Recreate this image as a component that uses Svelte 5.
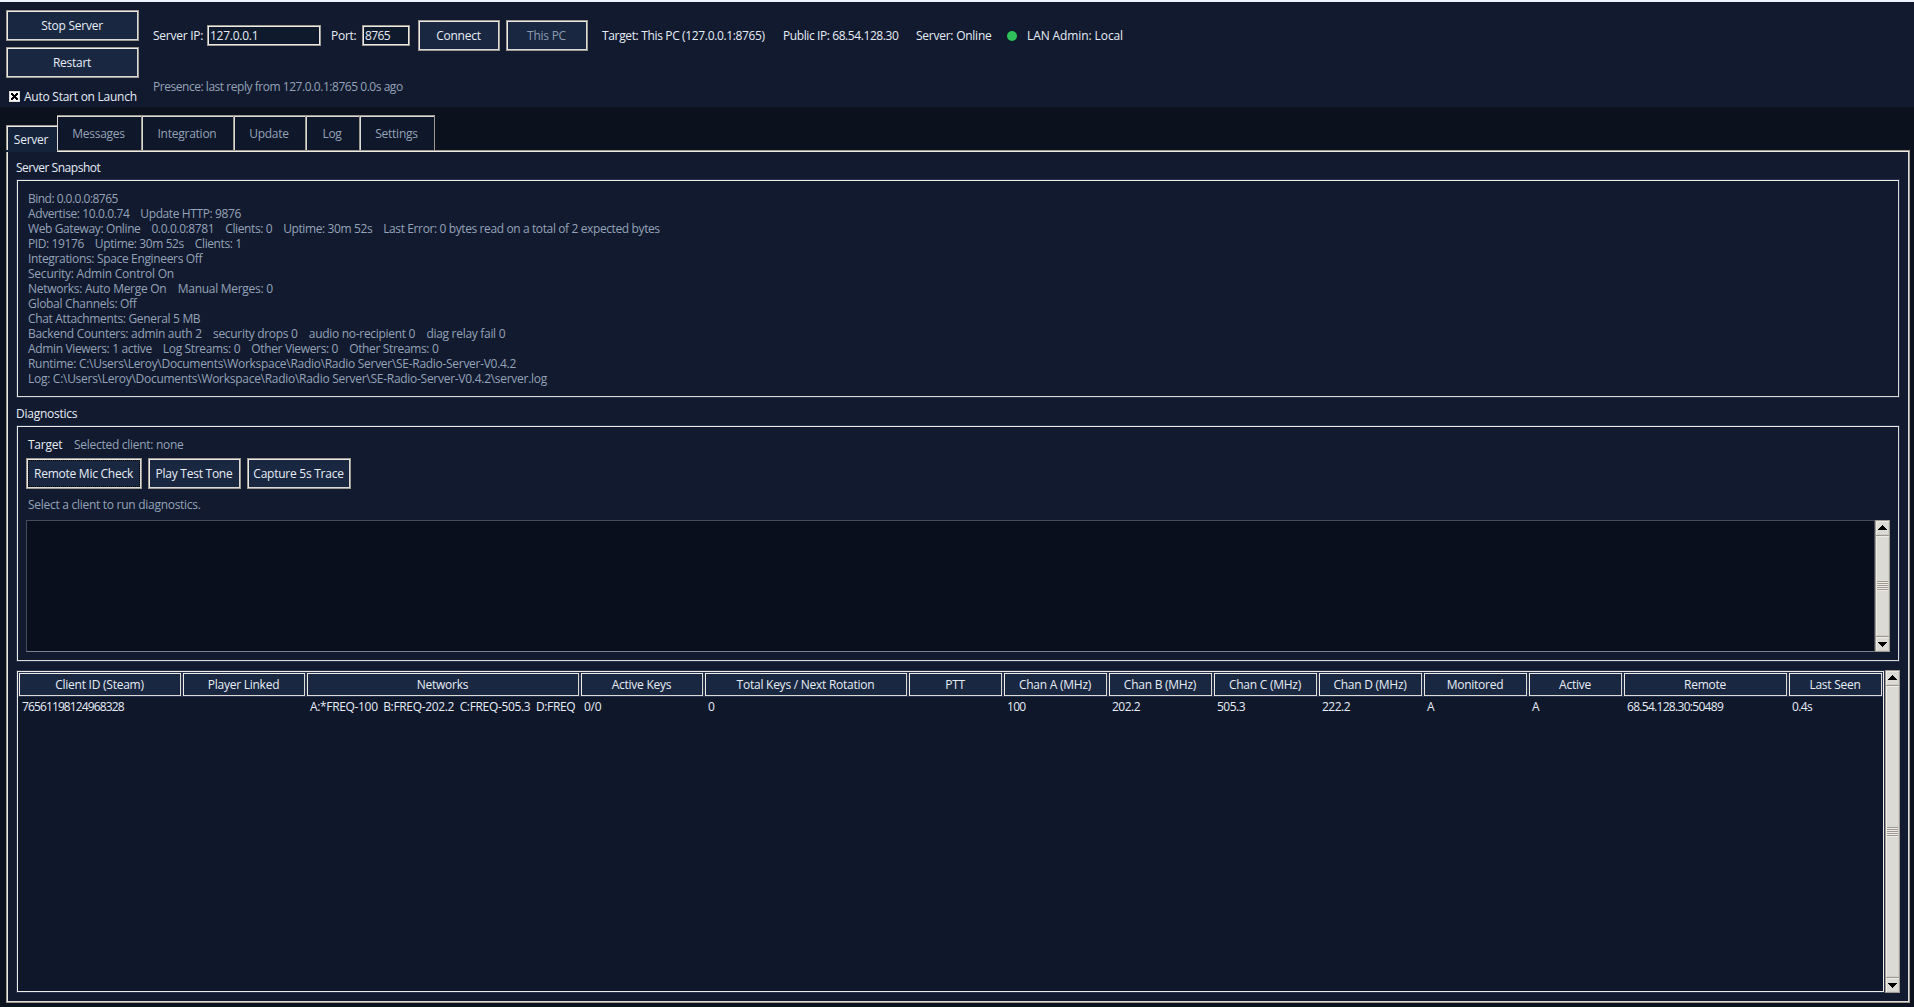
<script>
    let serverIp = '127.0.0.1';
    let port = '8765';
    let activeTab = 'Server';

    const tabs = [
        { name: 'Server', width: 51 },
        { name: 'Messages', width: 85 },
        { name: 'Integration', width: 92 },
        { name: 'Update', width: 72 },
        { name: 'Log', width: 54 },
        { name: 'Settings', width: 75 }
    ];

    const snapshot = [
        { text: 'Bind: 0.0.0.0:8765', spacing: -0.52 },
        { text: 'Advertise: 10.0.0.74    Update HTTP: 9876', spacing: -0.39 },
        { text: 'Web Gateway: Online    0.0.0.0:8781    Clients: 0    Uptime: 30m 52s    Last Error: 0 bytes read on a total of 2 expected bytes', spacing: -0.385 },
        { text: 'PID: 19176    Uptime: 30m 52s    Clients: 1', spacing: -0.39 },
        { text: 'Integrations: Space Engineers Off', spacing: -0.34 },
        { text: 'Security: Admin Control On', spacing: -0.23 },
        { text: 'Networks: Auto Merge On    Manual Merges: 0', spacing: -0.28 },
        { text: 'Global Channels: Off', spacing: -0.3 },
        { text: 'Chat Attachments: General 5 MB', spacing: -0.33 },
        { text: 'Backend Counters: admin auth 2    security drops 0    audio no-recipient 0    diag relay fail 0', spacing: -0.3 },
        { text: 'Admin Viewers: 1 active    Log Streams: 0    Other Viewers: 0    Other Streams: 0', spacing: -0.35 },
        { text: 'Runtime: C:\\Users\\Leroy\\Documents\\Workspace\\Radio\\Radio Server\\SE-Radio-Server-V0.4.2', spacing: -0.29 },
        { text: 'Log: C:\\Users\\Leroy\\Documents\\Workspace\\Radio\\Radio Server\\SE-Radio-Server-V0.4.2\\server.log', spacing: -0.28 }
    ];

    const columns = [
        { title: 'Client ID (Steam)', width: 164, value: '76561198124968328', spacing: -0.88 },
        { title: 'Player Linked', width: 124, value: '' },
        { title: 'Networks', width: 274, value: 'A:*FREQ-100  B:FREQ-202.2  C:FREQ-505.3  D:FREQ', spacing: -0.34 },
        { title: 'Active Keys', width: 124, value: '0/0' },
        { title: 'Total Keys / Next Rotation', width: 204, value: '0' },
        { title: 'PTT', width: 95, value: '' },
        { title: 'Chan A (MHz)', width: 105, value: '100', spacing: -0.7 },
        { title: 'Chan B (MHz)', width: 105, value: '202.2', spacing: -0.5 },
        { title: 'Chan C (MHz)', width: 105, value: '505.3', spacing: -0.5 },
        { title: 'Chan D (MHz)', width: 105, value: '222.2', spacing: -0.5 },
        { title: 'Monitored', width: 105, value: 'A' },
        { title: 'Active', width: 95, value: 'A' },
        { title: 'Remote', width: 165, value: '68.54.128.30:50489', spacing: -0.7 },
        { title: 'Last Seen', width: 95, value: '0.4s', spacing: -0.6 }
    ];

    const gridColumns = columns.map((c) => c.width + 'px').join(' ');
</script>

{#snippet scrollbar()}
    <div class="scrollbar">
        <div class="arrow up">
            <svg width="9" height="5" viewBox="0 0 9 5" shape-rendering="crispEdges"><path d="M4 0h1v1h1v1h1v1h1v1h1v1H0V4h1V3h1V2h1V1h1z" /></svg>
        </div>
        <div class="thumb">
            <div class="grip"></div>
        </div>
        <div class="arrow">
            <svg width="9" height="5" viewBox="0 0 9 5" shape-rendering="crispEdges"><path d="M0 0h9v1H8v1H7v1H6v1H5v1H4V4H3V3H2V2H1V1H0z" /></svg>
        </div>
    </div>
{/snippet}

<main>
    <header>
        <div class="power">
            <button>Stop Server</button>
            <button>Restart</button>
            <label>
                <span class="check">
                    <svg width="7" height="7" viewBox="0 0 7 7" shape-rendering="crispEdges"><path d="M0 0h2v1h1v1h1V1h1V0h2v2H6v1H5v1h1v1h1v2H5V6H4V5H3v1H2v1H0V5h1V4h1V3H1V2H0z" /></svg>
                </span>
                Auto Start on Launch
            </label>
        </div>
        <div class="connection">
            <div class="connect-row">
                <span class="ip-label">Server IP:</span>
                <input class="ip" bind:value={serverIp} />
                <span class="port-label">Port:</span>
                <input class="port" bind:value={port} />
                <button class="connect">Connect</button>
                <button class="this-pc" disabled>This PC</button>
                <span class="target">Target: This PC (127.0.0.1:8765)</span>
                <span class="public">Public IP: 68.54.128.30</span>
                <span class="status">Server: Online</span>
                <span class="dot"><svg width="10" height="10" viewBox="0 0 10 10"><circle cx="5" cy="5" r="5" fill="#2fc25b" /></svg></span>
                <span class="admin">LAN Admin: Local</span>
            </div>
            <div class="presence">Presence: last reply from 127.0.0.1:8765 0.0s ago</div>
        </div>
    </header>

    <nav>
        {#each tabs as tab}
            <button
                class="tab"
                class:active={tab.name === activeTab}
                style="width: {tab.width}px"
                on:click={() => (activeTab = tab.name)}>{tab.name}</button>
        {/each}
    </nav>

    <section class="pane">
        <h2 class="first">Server Snapshot</h2>
        <div class="frame snapshot">
            {#each snapshot as line}
                <div class="line" style="letter-spacing: {line.spacing}px">{line.text}</div>
            {/each}
        </div>

        <h2 class="second">Diagnostics</h2>
        <div class="frame diagnostics">
            <div class="target-row">
                <span>Target</span>
                <span class="muted">Selected client: none</span>
            </div>
            <div class="actions">
                <button class="mic focused">Remote Mic Check</button>
                <button class="tone">Play Test Tone</button>
                <button class="trace">Capture 5s Trace</button>
            </div>
            <div class="hint">Select a client to run diagnostics.</div>
            <div class="output">
                <div class="console"></div>
                {@render scrollbar()}
            </div>
        </div>

        <div class="clients">
            <div class="table">
                <div class="grid" style="grid-template-columns: {gridColumns}">
                    {#each columns as col}
                        <div class="th">{col.title}</div>
                    {/each}
                    {#each columns as col}
                        <div class="td" style="letter-spacing: {col.spacing ?? -0.25}px">{col.value}</div>
                    {/each}
                </div>
            </div>
            {@render scrollbar()}
        </div>
    </section>
</main>

<style>
    :global(body) {
        background-color: #0b121e;
    }

    * {
        box-sizing: border-box;
        margin: 0;
        padding: 0;
    }

    main {
        display: flex;
        flex-direction: column;
        height: 1007px;
        overflow: hidden;
        border-top: 2px solid #eef4fd;
        color: #e6edf7;
        background-color: #0b121e;
        font-family: "Open Sans", "Noto Sans", sans-serif;
        font-size: 12px;
        line-height: 15px;
        letter-spacing: -0.25px;
        white-space: nowrap;
    }

    header {
        display: flex;
        height: 105px;
        flex: none;
        padding: 8px 6px 0;
        background-color: #121a2f;
    }

    button,
    input {
        font: inherit;
        letter-spacing: inherit;
        color: inherit;
    }

    button {
        height: 31px;
        flex: none;
        padding-right: 1px;
        background-color: #1a2740;
        border: 1px solid #9e9a91;
        box-shadow: inset 1px 1px #eeebe7, inset -1px -1px #dcdad5;
    }

    button:disabled {
        color: #8b9bb3;
    }

    .power {
        display: flex;
        flex-direction: column;
        gap: 6px;
        width: 133px;
    }

    label {
        display: flex;
        align-items: center;
        gap: 4px;
        padding-left: 3px;
        height: 25px;
        flex: none;
    }

    .check {
        display: flex;
        align-items: center;
        justify-content: center;
        width: 11px;
        height: 11px;
        background-color: #fff;
        border: 1px solid #dcdad5;
    }

    .connection {
        padding-left: 14px;
    }

    .connect-row {
        display: flex;
        align-items: center;
        height: 51px;
    }

    .ip-label {
        width: 54px;
    }

    .port-label {
        width: 31px;
        margin-left: 10px;
    }

    input {
        height: 21px;
        padding: 0 2px;
        background-color: #0f1a2c;
        border: 1px solid #9e9a91;
        box-shadow: inset 0 0 0 1px #eeebe7;
        outline: none;
    }

    .ip {
        width: 114px;
    }

    .port {
        width: 48px;
        letter-spacing: -0.6px;
    }

    .connect {
        width: 82px;
        margin-left: 8px;
    }

    .this-pc {
        width: 82px;
        margin-left: 6px;
    }

    .target {
        width: 181px;
        margin-left: 14px;
        letter-spacing: -0.35px;
    }

    .public {
        width: 133px;
        letter-spacing: -0.41px;
    }

    .status {
        width: 89px;
    }

    .dot {
        display: flex;
        align-items: center;
        justify-content: center;
        width: 14px;
        height: 14px;
        margin-right: 8px;
        background-color: #0f1a2c;
    }

    .admin {
        letter-spacing: -0.1px;
    }

    .presence {
        color: #94a3b8;
        padding-top: 18px;
        letter-spacing: -0.46px;
    }

    nav {
        display: flex;
        align-items: flex-end;
        height: 43px;
        flex: none;
        padding-left: 6px;
    }

    .tab {
        height: 35px;
        padding-top: 1px;
        color: #94a3b8;
        background-color: #0f172a;
        border: 0;
        border-top: 1px solid #9e9a91;
        border-right: 1px solid #9e9a91;
        box-shadow: inset 1px 1px #dcdad5;
    }

    .tab.active {
        position: relative;
        height: 25px;
        padding-top: 3px;
        padding-right: 2px;
        color: #e6edf7;
        background-color: #15233a;
        border-left: 1px solid #9e9a91;
        border-right: 0;
        box-shadow: inset 1px 1px #eeebe7, 0 2px #15233a;
    }

    .pane {
        width: 1904px;
        height: 853px;
        flex: none;
        margin-left: 6px;
        padding: 8px 8px 0 9px;
        background-color: #121a2f;
        border: 1px solid #9e9a91;
        box-shadow: inset 1px 1px #eeebe7, inset -1px -1px #dcdad5;
    }

    h2 {
        height: 20px;
        padding-top: 1px;
        font-size: 12px;
        font-weight: normal;
    }

    .first {
        letter-spacing: -0.48px;
    }

    .second {
        height: 19px;
        margin-top: 8px;
        padding-top: 0;
    }

    .frame {
        width: 1884px;
        border: 1px solid #26324c;
        box-shadow: inset 1px 1px #eeebe7, inset -1px -1px #dcdad5;
    }

    .snapshot {
        height: 219px;
        padding: 11px 11px 0;
        color: #94a3b8;
    }

    .line {
        white-space: pre;
    }

    .diagnostics {
        height: 237px;
        padding: 11px 9px 0;
    }

    .target-row {
        display: flex;
        padding-left: 2px;
    }

    .target-row span:first-child {
        width: 46px;
    }

    .muted,
    .hint {
        color: #94a3b8;
        letter-spacing: -0.28px;
    }

    .actions {
        display: flex;
        gap: 6px;
        margin-top: 6px;
    }

    .mic {
        width: 116px;
    }

    .tone {
        width: 93px;
    }

    .trace {
        width: 104px;
    }

    .focused {
        outline: 1px dotted #000;
        outline-offset: -3px;
    }

    .hint {
        padding: 8px 2px;
    }

    .output {
        display: flex;
        height: 132px;
    }

    .console {
        width: 1849px;
        background-color: #0a0f1e;
        border: 1px solid #454b5a;
        border-bottom-color: #7b8090;
    }

    .clients {
        display: flex;
        height: 323px;
        margin-top: 8px;
    }

    .table {
        width: 1869px;
        padding: 1px;
        overflow: hidden;
        background-color: #0f172a;
        border: 1px solid #26324c;
        box-shadow: inset 1px 1px #eeebe7, inset -1px -1px #eeebe7;
    }

    .grid {
        display: grid;
        grid-template-rows: 25px 20px;
    }

    .th {
        padding-right: 1px;
        text-align: center;
        line-height: 23px;
        background-color: #1a2740;
        border: 1px solid #26324c;
        box-shadow: inset 1px 1px #eeebe7, inset -1px -1px #dcdad5;
    }

    .td {
        padding-left: 4px;
        line-height: 20px;
        overflow: hidden;
        white-space: pre;
    }

    .scrollbar {
        display: flex;
        flex-direction: column;
        width: 15px;
        background-color: #9e9a91;
        border: 1px solid #9e9a91;
    }

    .arrow {
        display: flex;
        align-items: center;
        justify-content: center;
        height: 14px;
        background-color: #dcdad5;
        box-shadow: inset 1px 1px #eeebe7, inset -1px -1px #cfcdc8;
    }

    .up {
        padding-bottom: 2px;
    }

    .thumb {
        display: flex;
        align-items: center;
        justify-content: center;
        flex: 1;
        margin: 1px 0;
        background-color: #dcdad5;
        box-shadow: inset 1px 1px #eeebe7, inset -1px -1px #cfcdc8;
    }

    .grip {
        width: 11px;
        height: 10px;
        background: repeating-linear-gradient(#9e9a91 0 1px, #eeebe7 1px 2px);
    }
</style>
